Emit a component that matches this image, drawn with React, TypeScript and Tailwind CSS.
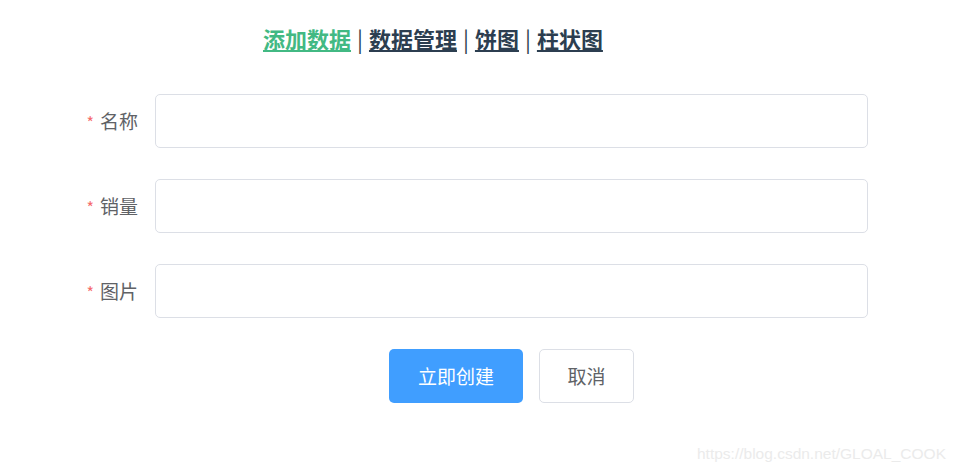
import React from 'react';

const fields = ['名称', '销量', '图片'];

const App: React.FC = () => {
  return (
    <div
      className="relative w-[956px] h-[473px] bg-white overflow-hidden"
      style={{ fontFamily: '"Noto Sans CJK SC", "Noto Sans", sans-serif' }}
    >
      {/* Nav */}
      <div className="pt-[22px] pl-[263px] text-[22px] leading-[32px] text-[#2c3e50] whitespace-nowrap">
        <a className="font-bold underline text-[#42b983] cursor-pointer">添加数据</a>
        <span className="mx-[6px]">|</span>
        <a className="font-bold underline cursor-pointer">数据管理</a>
        <span className="mx-[6px]">|</span>
        <a className="font-bold underline cursor-pointer">饼图</a>
        <span className="mx-[6px]">|</span>
        <a className="font-bold underline cursor-pointer">柱状图</a>
      </div>

      {/* Form */}
      <form className="mt-[40px] flex flex-col gap-[31px] w-[868px]">
        {fields.map((name) => (
          <div key={name} className="flex items-center h-[54px]">
            <label className="w-[155px] pr-[17px] text-right text-[19px] text-[#606266]">
              <span className="text-[#f56c6c] mr-[6px] text-[16px]">*</span>
              {name}
            </label>
            <input
              type="text"
              className="flex-1 h-[54px] border border-[#dcdfe6] rounded-[5px] px-4 outline-none"
            />
          </div>
        ))}
        <div className="flex justify-center gap-[16px] pl-[155px]">
          <button
            type="button"
            className="w-[134px] h-[54px] rounded-[5px] bg-[#409eff] text-white text-[19px]"
          >
            立即创建
          </button>
          <button
            type="button"
            className="w-[95px] h-[54px] rounded-[5px] border border-[#dcdfe6] bg-white text-[#606266] text-[19px]"
          >
            取消
          </button>
        </div>
      </form>

      {/* Watermark */}
      <div
        className="absolute right-[10px] bottom-[8px] text-[15.5px] text-[#ebebeb]"
        style={{ fontFamily: '"Liberation Sans", Arial, sans-serif' }}
      >
        https://blog.csdn.net/GLOAL_COOK
      </div>
    </div>
  );
};

export default App;
